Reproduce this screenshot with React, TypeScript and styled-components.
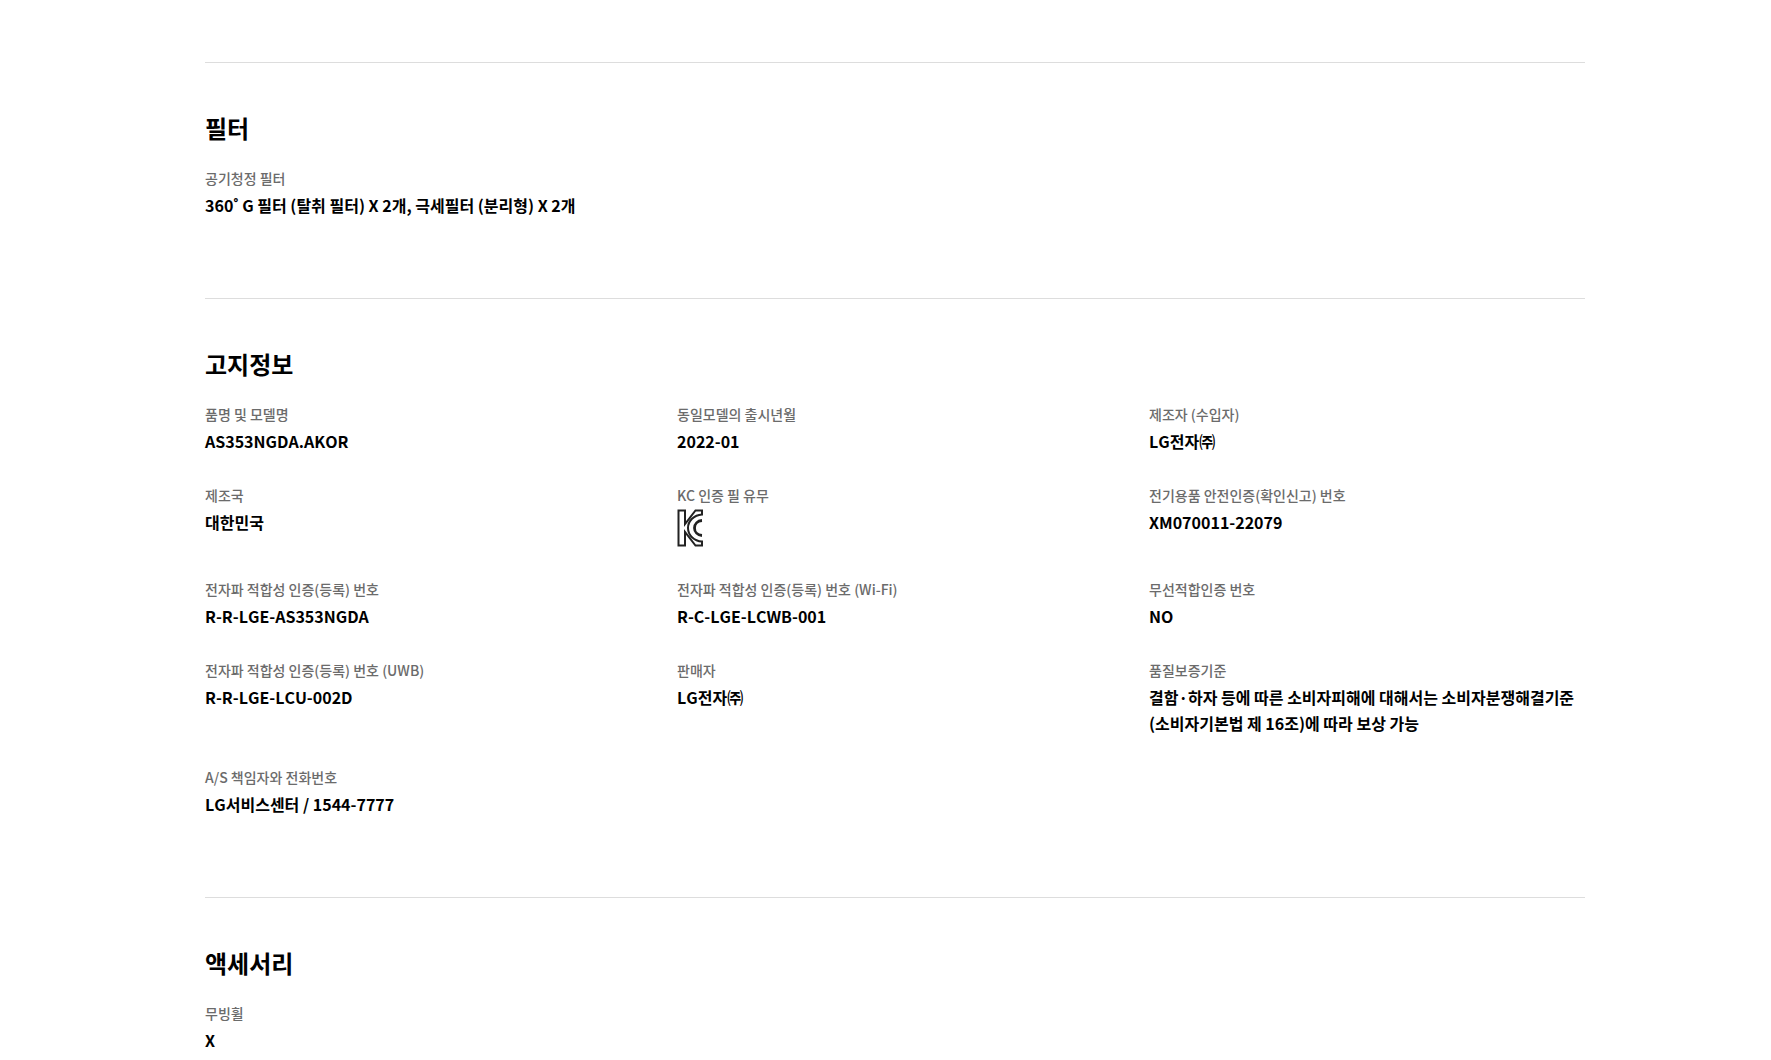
import React from "react";
import styled, { createGlobalStyle } from "styled-components";

const Global = createGlobalStyle`
  html, body { margin: 0; padding: 0; background: #fff; }
  body { font-family: "Noto Sans CJK KR", "Noto Sans", sans-serif; color: #000; }
`;

const Page = styled.main`
  padding: 62px 186px 0 205px;
`;

const Section = styled.section`
  border-top: 1px solid #dddddd;
  padding: 48px 0 80px;
  &:last-child { padding-bottom: 0; }
`;

const Heading = styled.h3`
  margin: 0 0 20px;
  font-size: 24px;
  line-height: 34px;
  font-weight: 700;
`;

const Grid = styled.dl`
  margin: 0;
  display: grid;
  grid-template-columns: repeat(3, 436px);
  column-gap: 36px;
  row-gap: 28px;
`;

const Item = styled.div`
  min-width: 0;
`;

const Label = styled.dt`
  font-size: 14px;
  line-height: 26px;
  font-weight: 500;
  color: #6b6b6b;
`;

const Value = styled.dd`
  margin: 1px 0 0;
  font-size: 16px;
  line-height: 26px;
  font-weight: 700;
  font-kerning: none;
`;

const KcMark = styled.svg`
  display: block;
  width: 26px;
  height: 38px;
  margin: 0 0 1px;
`;

const KcIcon = () => (
  <KcMark viewBox="0 0 26 38" fill="none" stroke="#222222" strokeWidth="2">
    <path d="M1.500 1.500H8V15L18.500 1.500H25V5.500C17 6 11 12 11 19S17 32 25 32.500V36.500H18.500L8 23V36.500H1.500Z" />
    <path d="M25 11.500C20.500 11.800 17.500 15 17.500 19S20.500 26.200 25 26.500" strokeWidth="2.800" />
  </KcMark>
);

type Spec = { label: string; value: React.ReactNode };

const filter: Spec[] = [
  { label: "공기청정 필터", value: "360˚ G 필터 (탈취 필터) X 2개, 극세필터 (분리형) X 2개" },
];

const notice: Spec[] = [
  { label: "품명 및 모델명", value: "AS353NGDA.AKOR" },
  { label: "동일모델의 출시년월", value: "2022-01" },
  { label: "제조자 (수입자)", value: "LG전자㈜" },
  { label: "제조국", value: "대한민국" },
  { label: "KC 인증 필 유무", value: <KcIcon /> },
  { label: "전기용품 안전인증(확인신고) 번호", value: "XM070011-22079" },
  { label: "전자파 적합성 인증(등록) 번호", value: "R-R-LGE-AS353NGDA" },
  { label: "전자파 적합성 인증(등록) 번호 (Wi-Fi)", value: "R-C-LGE-LCWB-001" },
  { label: "무선적합인증 번호", value: "NO" },
  { label: "전자파 적합성 인증(등록) 번호 (UWB)", value: "R-R-LGE-LCU-002D" },
  { label: "판매자", value: "LG전자㈜" },
  { label: "품질보증기준", value: "결함·하자 등에 따른 소비자피해에 대해서는 소비자분쟁해결기준 (소비자기본법 제 16조)에 따라 보상 가능" },
  { label: "A/S 책임자와 전화번호", value: "LG서비스센터 / 1544-7777" },
];

const accessory: Spec[] = [{ label: "무빙휠", value: "X" }];

const SpecSection = ({ title, items }: { title: string; items: Spec[] }) => (
  <Section>
    <Heading>{title}</Heading>
    <Grid>
      {items.map((it) => (
        <Item key={it.label}>
          <Label>{it.label}</Label>
          <Value>{it.value}</Value>
        </Item>
      ))}
    </Grid>
  </Section>
);

export default function App() {
  return (
    <Page>
      <Global />
      <SpecSection title="필터" items={filter} />
      <SpecSection title="고지정보" items={notice} />
      <SpecSection title="액세서리" items={accessory} />
    </Page>
  );
}
